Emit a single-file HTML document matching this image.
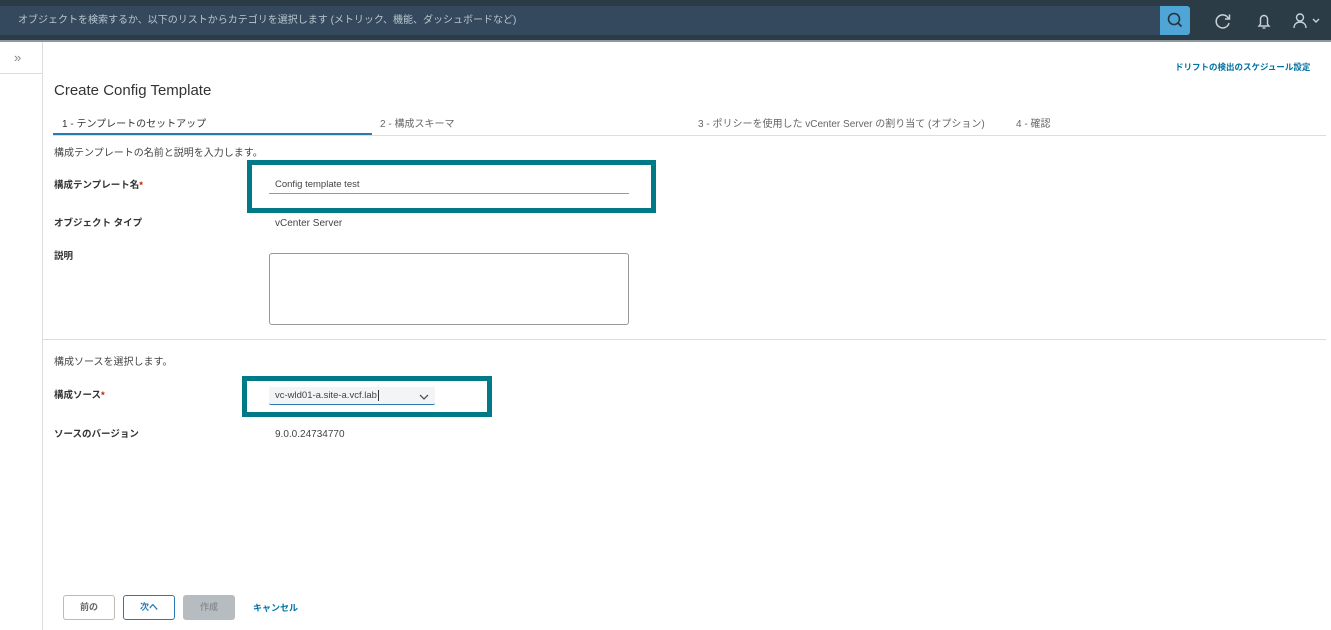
<!DOCTYPE html>
<html><head><meta charset="utf-8"><style>
*{box-sizing:border-box;margin:0;padding:0}
body{width:1331px;height:630px;overflow:hidden;background:#fff;font-family:"Liberation Sans","Noto Sans CJK JP",sans-serif;color:#333;position:relative;font-size:10px;line-height:1.2}
.a{position:absolute}
.hdr{left:0;top:0;width:1331px;height:42px;background:#2c3c46;border-bottom:2px solid #8e999f}
.search{left:0;top:6px;width:1160px;height:29px;background:#34495e;color:#b9c6cf;font-size:10px;line-height:29px;padding-left:18px}
.sbtn{left:1160px;top:6px;width:30px;height:29px;background:#4fa6d6;border-radius:0 3px 3px 0}
.side{left:0;top:42px;width:43px;height:588px;border-right:1px solid #ddd}
.lbl{font-weight:bold;font-size:9.5px;color:#333}
.val{font-size:10px;color:#444}
.teal{border:5px solid #007a87}
.btn{height:25px;border:1px solid #bbb;border-radius:3px;font-size:9px;font-weight:bold;text-align:center;line-height:23px}
</style></head><body>
<div class="a hdr"></div>
<div class="a search">オブジェクトを検索するか、以下のリストからカテゴリを選択します (メトリック、機能、ダッシュボードなど)</div>
<div class="a sbtn"><svg width="30" height="29"><circle cx="14" cy="13" r="5.5" fill="none" stroke="#24353f" stroke-width="1.6"/><line x1="18" y1="17" x2="21.5" y2="20.5" stroke="#24353f" stroke-width="1.8"/></svg></div>
<svg class="a" style="left:1212px;top:10px" width="22" height="22"><path d="M16.5 8.5A6.5 6.5 0 1 0 17 13" fill="none" stroke="#c8d2d8" stroke-width="1.5"/><path d="M17.5 4.5v4.5h-4.5" fill="none" stroke="#c8d2d8" stroke-width="1.5"/></svg>
<svg class="a" style="left:1253px;top:10px" width="22" height="22"><path d="M6 16h10l-1.5-2V9a3.5 3.5 0 0 0-7 0v5z" fill="none" stroke="#c8d2d8" stroke-width="1.4"/><path d="M9.5 18h3" stroke="#c8d2d8" stroke-width="1.4"/></svg>
<svg class="a" style="left:1290px;top:10px" width="40" height="22"><circle cx="10" cy="7.5" r="3.5" fill="none" stroke="#c8d2d8" stroke-width="1.4"/><path d="M4 18c0-4 3-6 6-6s6 2 6 6" fill="none" stroke="#c8d2d8" stroke-width="1.4"/><path d="M23 9l3 3 3-3" fill="none" stroke="#c8d2d8" stroke-width="1.4"/></svg>
<div class="a side"></div>
<div class="a" style="left:0;top:73px;width:43px;height:1px;background:#ddd"></div>
<div class="a" style="left:14px;top:50px;font-size:13px;color:#888">»</div>
<div class="a" style="left:1175px;top:62px;font-size:8.5px;font-weight:bold;color:#0072a3">ドリフトの検出のスケジュール設定</div>
<div class="a" style="left:54px;top:82px;font-size:15px;color:#333">Create Config Template</div>
<div class="a" style="left:62px;top:119px;font-size:10px;color:#333">1 - テンプレートのセットアップ</div>
<div class="a" style="left:380px;top:119px;font-size:10px;color:#666">2 - 構成スキーマ</div>
<div class="a" style="left:698px;top:119px;font-size:10px;color:#666">3 - ポリシーを使用した vCenter Server の割り当て (オプション)</div>
<div class="a" style="left:1016px;top:119px;font-size:10px;color:#666">4 - 確認</div>
<div class="a" style="left:53px;top:135px;width:1273px;height:1px;background:#ddd"></div>
<div class="a" style="left:53px;top:133px;width:319px;height:2px;background:#2a7ab0"></div>
<div class="a val" style="left:54px;top:148px">構成テンプレートの名前と説明を入力します。</div>
<div class="a lbl" style="left:54px;top:180px">構成テンプレート名<span style="color:#c21d00">*</span></div>
<div class="a teal" style="left:247px;top:160px;width:409px;height:53px"></div>
<div class="a val" style="left:275px;top:179px;font-size:9.5px">Config template test</div>
<div class="a" style="left:269px;top:193px;width:360px;height:1px;background:#999"></div>
<div class="a lbl" style="left:54px;top:218px">オブジェクト タイプ</div>
<div class="a val" style="left:275px;top:218px">vCenter Server</div>
<div class="a lbl" style="left:54px;top:251px">説明</div>
<div class="a" style="left:269px;top:253px;width:360px;height:72px;border:1px solid #999;border-radius:3px"></div>
<div class="a" style="left:43px;top:339px;width:1283px;height:1px;background:#ddd"></div>
<div class="a val" style="left:54px;top:357px">構成ソースを選択します。</div>
<div class="a lbl" style="left:54px;top:390px">構成ソース<span style="color:#c21d00">*</span></div>
<div class="a teal" style="left:242px;top:376px;width:250px;height:41px"></div>
<div class="a" style="left:269px;top:387px;width:166px;height:18px;background:#f2f4f6;border-radius:2px;border-bottom:1px solid #2a7ab0"></div>
<div class="a val" style="left:275px;top:390px;font-size:9.5px">vc-wld01-a.site-a.vcf.lab<span style="border-left:1px solid #333;margin-left:1px"></span></div>
<svg class="a" style="left:418px;top:392px" width="12" height="10"><path d="M2 3l4 4 4-4" fill="none" stroke="#555" stroke-width="1.3"/></svg>
<div class="a lbl" style="left:54px;top:429px">ソースのバージョン</div>
<div class="a val" style="left:275px;top:429px">9.0.0.24734770</div>
<div class="a btn" style="left:63px;top:595px;width:52px;color:#666">前の</div>
<div class="a btn" style="left:123px;top:595px;width:52px;border-color:#2a7ab0;color:#2a7ab0">次へ</div>
<div class="a btn" style="left:183px;top:595px;width:52px;background:#b6bcc0;border-color:#b6bcc0;color:#8a9196">作成</div>
<div class="a" style="left:253px;top:603px;font-size:9px;font-weight:bold;color:#0072a3">キャンセル</div>
</body></html>
